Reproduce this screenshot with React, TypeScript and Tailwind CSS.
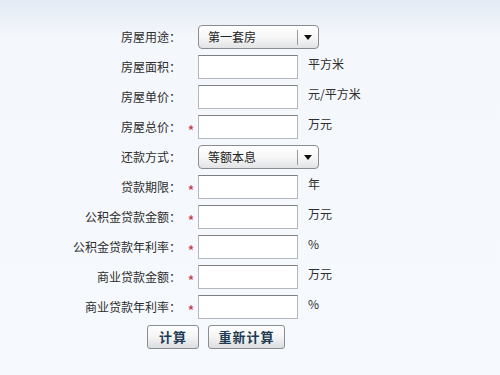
import React from "react";

const font = { fontFamily: '"Noto Sans CJK SC", "Noto Sans", sans-serif' };

function Label({ text }: { text: string }) {
  return (
    <div className="w-[181px] shrink-0 text-right text-[12px] leading-[24px] text-[#2e2e2e]">
      {text}
    </div>
  );
}

function Star({ show }: { show: boolean }) {
  return (
    <div className="w-[17px] shrink-0 flex items-center justify-center pl-[3px] pt-[4px] text-[15px] leading-[24px] text-[#c8384f]">
      {show ? "*" : ""}
    </div>
  );
}

function Input() {
  return (
    <div className="w-[100px] h-[24px] shrink-0 bg-white border border-[#b4b8bd] border-t-[#7d7f82]" />
  );
}

function Select({ value }: { value: string }) {
  return (
    <div className="w-[121px] h-[24px] shrink-0 flex items-center rounded-[4px] border border-[#8a8d90] bg-gradient-to-b from-[#ffffff] via-[#f7f7f7] to-[#e2e3e5]">
      <div className="flex-1 pl-[9px] text-[12px] leading-[22px] text-[#222]">{value}</div>
      <div className="w-px h-[15px] bg-[#9a9da0]" />
      <div className="w-[20px] flex items-center justify-center">
        <svg width="8" height="5" viewBox="0 0 8 5">
          <polygon points="0,0 8,0 4,5" fill="#111" />
        </svg>
      </div>
    </div>
  );
}

function Unit({ text }: { text: string }) {
  return <div className="pl-[10px] -mt-[3px] text-[12px] leading-[24px] text-[#2e2e2e]">{text}</div>;
}

const rows: { label: string; star: boolean; kind: "input" | "select"; value?: string; unit?: string }[] = [
  { label: "房屋用途：", star: false, kind: "select", value: "第一套房" },
  { label: "房屋面积：", star: false, kind: "input", unit: "平方米" },
  { label: "房屋单价：", star: false, kind: "input", unit: "元/平方米" },
  { label: "房屋总价：", star: true, kind: "input", unit: "万元" },
  { label: "还款方式：", star: false, kind: "select", value: "等额本息" },
  { label: "贷款期限：", star: true, kind: "input", unit: "年" },
  { label: "公积金贷款金额：", star: true, kind: "input", unit: "万元" },
  { label: "公积金贷款年利率：", star: true, kind: "input", unit: "%" },
  { label: "商业贷款金额：", star: true, kind: "input", unit: "万元" },
  { label: "商业贷款年利率：", star: true, kind: "input", unit: "%" },
];

function Button({ text, w }: { text: string; w: string }) {
  return (
    <div
      className={`${w} h-[24px] flex items-center justify-center rounded-[3px] border border-[#8a8d90] bg-gradient-to-b from-[#ffffff] via-[#f4f4f4] to-[#dcdde0] text-[13px] font-bold text-[#1d3a52] tracking-[1px]`}
    >
      {text}
    </div>
  );
}

export default function App() {
  return (
    <div
      className="w-[500px] h-[375px] overflow-hidden bg-gradient-to-b from-[#e3eaf3] via-[#f4f7fc] via-[10%] to-[#f6f9fd]"
      style={font}
    >
      <div className="flex flex-col gap-[6px] pt-[25px]">
        {rows.map((r, i) => (
          <div key={i} className="flex items-start h-[24px]">
            <Label text={r.label} />
            <Star show={r.star} />
            {r.kind === "select" ? <Select value={r.value!} /> : <Input />}
            {r.unit ? <Unit text={r.unit} /> : null}
          </div>
        ))}
        <div className="flex gap-[9px] pl-[147px]">
          <Button text="计算" w="w-[52px]" />
          <Button text="重新计算" w="w-[77px]" />
        </div>
      </div>
    </div>
  );
}
